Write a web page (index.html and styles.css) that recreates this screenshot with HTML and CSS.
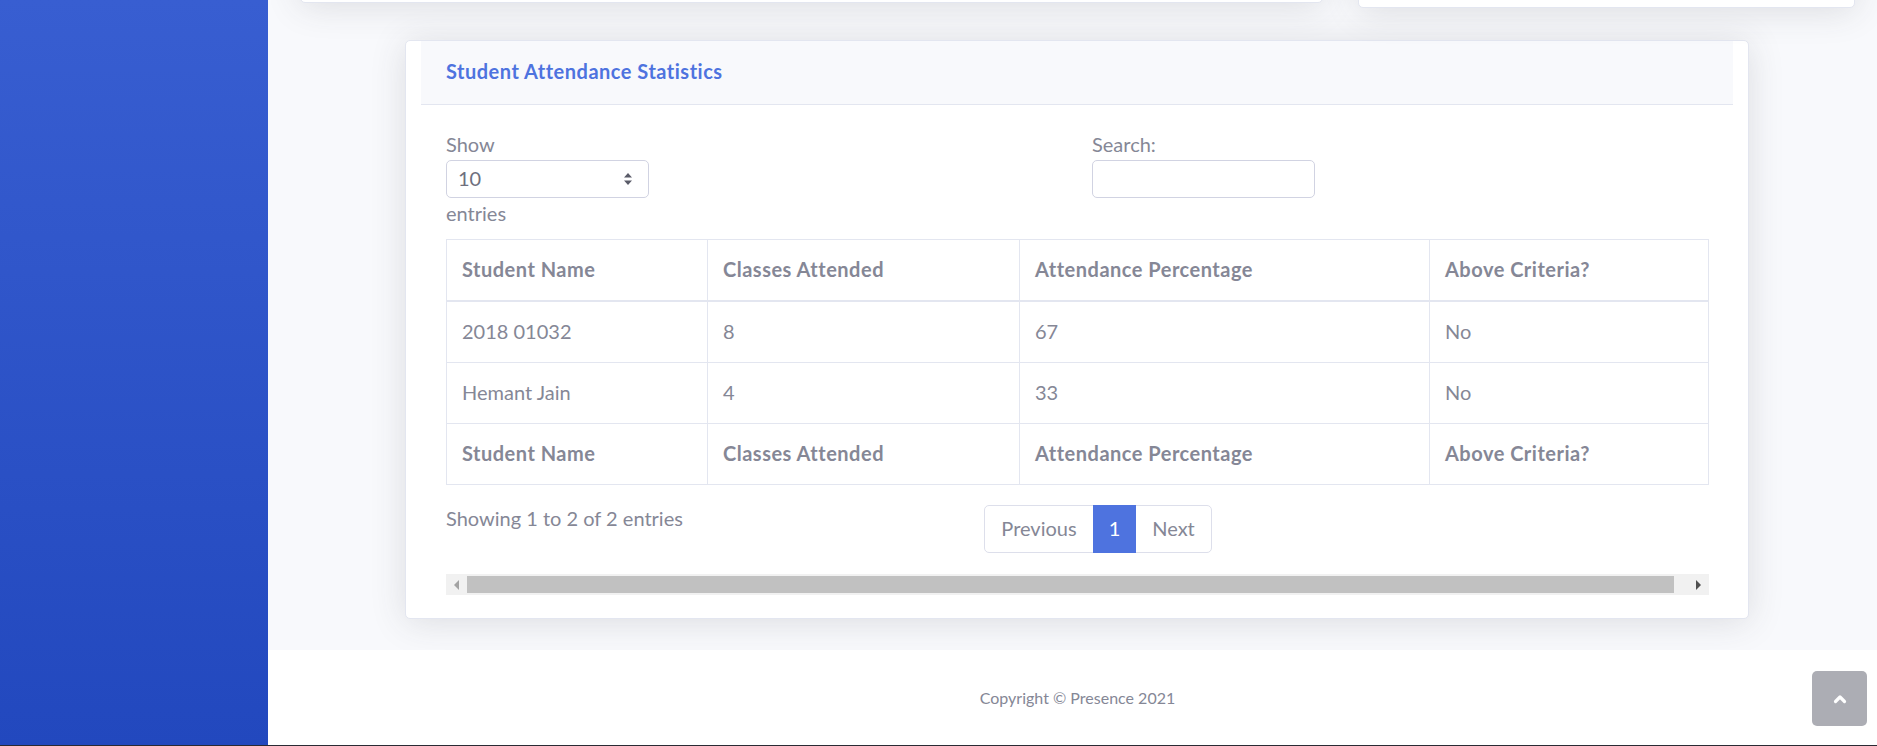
FILE: index.html
```html
<!DOCTYPE html>
<html lang="en">
<head>
<meta charset="utf-8">
<title>Presence - Attendance</title>
<link rel="stylesheet" href="styles.css">
</head>
<body>
<div class="app">
  <aside class="sidebar"></aside>
  <div class="wrapper">
    <main class="content">
      <div class="top-row">
        <div class="card top-card wide"></div>
        <div class="card top-card narrow"></div>
      </div>
      <section class="card stats">
        <div class="card-header"><h6 class="card-title">Student Attendance Statistics</h6></div>
        <div class="card-body">
          <div class="dt-top">
            <div class="dt-col">
              <div class="lbl">Show</div>
              <div class="select"><span>10</span>
                <svg class="sel-arrows" width="10" height="14" viewBox="0 0 10 14"><path d="M5 1 L9 5.5 H1 Z M5 13 L9 8.5 H1 Z" fill="#5a5c69"/></svg>
              </div>
              <div class="lbl">entries</div>
            </div>
            <div class="dt-col">
              <div class="lbl">Search:</div>
              <div class="search"></div>
            </div>
          </div>
          <table class="dt">
            <colgroup><col class="c1"><col class="c2"><col class="c3"><col class="c4"></colgroup>
            <thead>
              <tr><th>Student Name</th><th>Classes Attended</th><th>Attendance Percentage</th><th>Above Criteria?</th></tr>
            </thead>
            <tbody>
              <tr><td>2018 01032</td><td>8</td><td>67</td><td>No</td></tr>
              <tr><td>Hemant Jain</td><td>4</td><td>33</td><td>No</td></tr>
            </tbody>
            <tfoot>
              <tr><th>Student Name</th><th>Classes Attended</th><th>Attendance Percentage</th><th>Above Criteria?</th></tr>
            </tfoot>
          </table>
          <div class="dt-bottom">
            <div class="info-col">Showing 1 to 2 of 2 entries</div>
            <div class="pag-col">
              <ul class="pagination">
                <li class="page first">Previous</li>
                <li class="page active">1</li>
                <li class="page last">Next</li>
              </ul>
            </div>
          </div>
          <div class="hscroll">
            <span class="arrow left"><svg width="6" height="10" viewBox="0 0 6 10"><path d="M5 0 V10 L0 5 Z" fill="#a3a3a3"/></svg></span>
            <span class="thumb"></span>
            <span class="arrow right"><svg width="6" height="10" viewBox="0 0 6 10"><path d="M1 0 V10 L6 5 Z" fill="#505050"/></svg></span>
          </div>
        </div>
      </section>
    </main>
    <footer class="footer">Copyright © Presence 2021</footer>
  </div>
</div>
<div class="taskline"></div>
<a class="scroll-top" href="#">
  <svg width="14" height="10" viewBox="0 0 14 10"><path d="M2.5 7.5 L7 3 L11.5 7.5" fill="none" stroke="#fff" stroke-width="3.2" stroke-linecap="round" stroke-linejoin="round"/></svg>
</a>
</body>
</html>
```
FILE: styles.css
```css
* { box-sizing: border-box; }
html, body { margin: 0; padding: 0; }
body {
  font-family: "Lato", "Noto Sans", sans-serif;
  font-size: 20px;
  color: #858796;
  background: #fff;
  height: 746px;
  overflow: hidden;
}
.app { display: flex; height: 745px; }
.sidebar {
  width: 268px;
  flex: none;
  background: linear-gradient(180deg, #385ed1 0%, #2248be 100%);
}
.wrapper { flex: 1; display: flex; flex-direction: column; min-width: 0; }
.content {
  height: 650px;
  flex: none;
  background: #f8f9fc;
  overflow: hidden;
}
.footer {
  flex: 1;
  background: #fff;
  display: flex;
  align-items: center;
  justify-content: center;
  padding-left: 10px;
  font-size: 16px;
}
.taskline { height: 1px; background: #2a2a33; }

.card {
  background: #fff;
  border: 1px solid #e3e6f0;
  border-radius: 5px;
  box-shadow: 0 3px 35px 0 rgba(58, 59, 69, 0.15);
}
.top-row {
  display: flex;
  align-items: flex-start;
  gap: 35px;
  margin-top: -200px;
  padding-left: 32px;
}
.top-card.wide { width: 1023px; height: 203px; }
.top-card.narrow { width: 497px; height: 208px; }

.stats {
  margin: 32px 0 0 137px;
  width: 1344px;
  padding: 0 15px;
}
.card-header {
  background: #f8f9fc;
  border-bottom: 1px solid #e3e6f0;
  height: 64px;
  padding: 0 25px 3px;
  display: flex;
  align-items: center;
}
.card-title {
  margin: 0;
  font-size: 20px;
  font-weight: 700;
  letter-spacing: 0.5px;
  color: #4e73df;
}
.card-body { padding: 24px 25px 23px; }

.dt-top {
  display: grid;
  grid-template-columns: 616px 616px;
  column-gap: 30px;
}
.lbl { line-height: 30px; }
.select {
  width: 203px;
  height: 38px;
  margin-top: 1px;
  border: 1px solid #d1d3e2;
  border-radius: 5px;
  display: flex;
  align-items: center;
  justify-content: space-between;
  padding: 0 15px 2px 11px;
  color: #6e707e;
}
.sel-arrows { display: block; margin-top: 2px; }
.search {
  width: 223px;
  height: 38px;
  margin-top: 1px;
  border: 1px solid #d1d3e2;
  border-radius: 5px;
}

.dt {
  margin-top: 11px;
  width: 1262px;
  border-collapse: collapse;
  table-layout: fixed;
  border: 1px solid #e3e6f0;
}
.c1 { width: 261px; }
.c2 { width: 312px; }
.c3 { width: 410px; }
.c4 { width: 279px; }
.dt th, .dt td {
  border: 1px solid #e3e6f0;
  padding: 14px 15px 16px;
  line-height: 30px;
  text-align: left;
  font-size: 20px;
  white-space: nowrap;
}
.dt th { font-weight: 700; letter-spacing: 0.5px; }
.dt thead th { border-bottom-width: 2px; }

.dt-bottom {
  display: flex;
  margin: 21px -15px 0;
}
.info-col { width: 41.6667%; padding: 0 15px; line-height: 30px; margin-top: -3px; }
.pag-col { width: 58.3333%; padding: 0 15px; }
.pagination { display: flex; list-style: none; margin: -1px 0 1px; padding: 0; }
.page {
  border: 1px solid #dddfeb;
  padding: 9px 16px 11px;
  line-height: 26px;
  color: #858796;
  background: #fff;
}
.page + .page { margin-left: -1px; }
.page.active { padding: 9px 15px 11px; }
.page.first { border-radius: 5px 0 0 5px; }
.page.last { border-radius: 0 5px 5px 0; }
.page.active { background: #4e73df; border-color: #4e73df; color: #fff; position: relative; }

.hscroll {
  margin-top: 20px;
  width: 1263px;
  height: 21px;
  background: #f1f1f1;
  display: flex;
  align-items: center;
}
.arrow { width: 21px; height: 21px; display: flex; align-items: center; justify-content: center; flex: none; }
.arrow.right { width: 35px; justify-content: flex-end; padding-right: 8px; }
.thumb { flex: 1; height: 17px; background: #c1c1c1; }

.scroll-top {
  position: fixed;
  right: 10px;
  bottom: 20px;
  width: 55px;
  height: 55px;
  border-radius: 5px;
  background: rgba(90, 92, 105, 0.5);
  display: flex;
  align-items: center;
  justify-content: center;
}
```
